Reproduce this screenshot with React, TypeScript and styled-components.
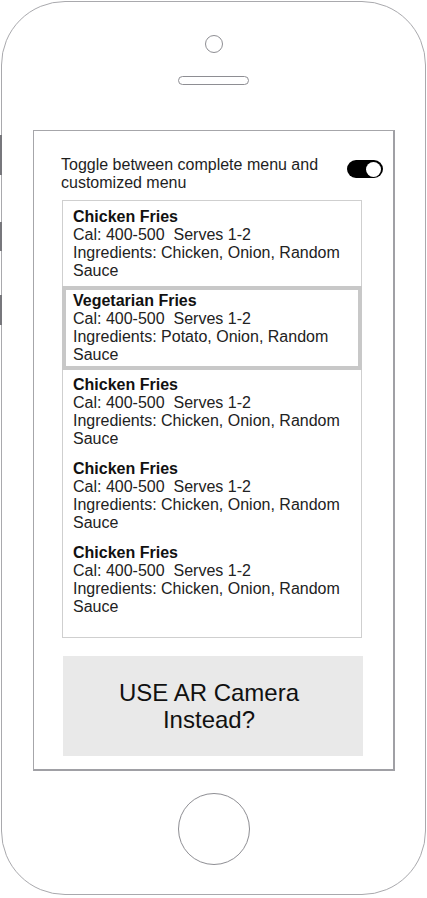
import React from "react";
import styled, { createGlobalStyle } from "styled-components";

const Global = createGlobalStyle`
  html, body { margin: 0; padding: 0; background: #fff; }
  body { font-family: "Liberation Sans", Arial, Helvetica, sans-serif; }
  * { box-sizing: border-box; }
`;

const Stage = styled.div`
  position: relative;
  width: 427px;
  height: 898px;
  padding: 1px 0 0 1px;
`;

const SideKey = styled.div<{ $top: number; $h: number }>`
  position: absolute;
  left: 0;
  top: ${(p) => p.$top}px;
  width: 2px;
  height: ${(p) => p.$h}px;
  background: #77777c;
`;

const Phone = styled.div`
  width: 425px;
  height: 894px;
  border: 1px solid #a9a9ad;
  border-radius: 64px;
  display: flex;
  flex-direction: column;
  align-items: center;
  padding-top: 33px;
  background: #fff;
`;

const CameraDot = styled.div`
  width: 18px;
  height: 18px;
  border-radius: 50%;
  border: 1.5px solid #8e8e93;
`;

const Speaker = styled.div`
  margin-top: 23px;
  width: 71px;
  height: 9px;
  border-radius: 5px;
  border: 1.5px solid #8e8e93;
`;

const Screen = styled.div`
  margin-top: 45px;
  margin-left: 1px;
  width: 362px;
  height: 641px;
  border-top: 1px solid #a6a6aa;
  border-left: 1px solid #a6a6aa;
  border-right: 2px solid #a0a0a5;
  border-bottom: 2px solid #a0a0a5;
  display: flex;
  flex-direction: column;
  align-items: flex-start;
  padding: 25px 0 0 27px;
`;

const Header = styled.div`
  width: 322px;
  display: flex;
  align-items: flex-start;
  justify-content: space-between;
  gap: 12px;
`;

const HeaderText = styled.div`
  font-size: 16px;
  line-height: 18px;
  color: #1e1e1e;
  flex: 1;
`;

const Toggle = styled.div<{ $on: boolean }>`
  margin-top: 4px;
  width: 36px;
  height: 18px;
  flex: none;
  border-radius: 9px;
  background: ${(p) => (p.$on ? "#000" : "#ccc")};
  display: flex;
  align-items: center;
  justify-content: ${(p) => (p.$on ? "flex-end" : "flex-start")};
  padding: 0 2px;
`;

const Knob = styled.div`
  width: 15px;
  height: 15px;
  border-radius: 50%;
  background: #fff;
`;

const List = styled.div`
  margin-top: 8px;
  margin-left: 1px;
  width: 300px;
  height: 438px;
  border: 1px solid #cfcfcf;
  padding-top: 1px;
  display: flex;
  flex-direction: column;
`;

const Item = styled.div<{ $selected?: boolean }>`
  border: 4px solid ${(p) => (p.$selected ? "#c8c8c8" : "transparent")};
  margin: 0 -1px;
  padding: 2px 6px 2px 7px;
  font-size: 16px;
  line-height: 18px;
  color: #222;
`;

const Title = styled.div`
  font-weight: bold;
  color: #111;
`;

const Line = styled.div`
  white-space: pre-wrap;
`;

const CameraButton = styled.div`
  margin-top: 18px;
  margin-left: 2px;
  width: 300px;
  height: 100px;
  background: #e9e9e9;
  display: flex;
  align-items: center;
  justify-content: center;
  text-align: center;
  font-size: 24px;
  line-height: 27px;
  color: #111;
  padding: 0 54px 0 46px;
`;

const HomeButton = styled.div`
  margin-top: 22px;
  width: 72px;
  height: 72px;
  border-radius: 50%;
  border: 1.5px solid #8e8e93;
`;

const items = [
  { name: "Chicken Fries", ing: "Chicken, Onion, Random Sauce" },
  { name: "Vegetarian Fries", ing: "Potato, Onion, Random Sauce", selected: true },
  { name: "Chicken Fries", ing: "Chicken, Onion, Random Sauce" },
  { name: "Chicken Fries", ing: "Chicken, Onion, Random Sauce" },
  { name: "Chicken Fries", ing: "Chicken, Onion, Random Sauce" },
];

export default function App() {
  return (
    <>
      <Global />
      <Stage>
        <SideKey $top={135} $h={40} />
        <SideKey $top={222} $h={29} />
        <SideKey $top={295} $h={30} />
        <Phone>
          <CameraDot />
          <Speaker />
          <Screen>
            <Header>
              <HeaderText>Toggle between complete menu and customized menu</HeaderText>
              <Toggle $on>
                <Knob />
              </Toggle>
            </Header>
            <List>
              {items.map((it, i) => (
                <Item key={i} $selected={it.selected}>
                  <Title>{it.name}</Title>
                  <Line>{"Cal: 400-500  Serves 1-2"}</Line>
                  <Line>Ingredients: {it.ing}</Line>
                </Item>
              ))}
            </List>
            <CameraButton>USE AR Camera Instead?</CameraButton>
          </Screen>
          <HomeButton />
        </Phone>
      </Stage>
    </>
  );
}
